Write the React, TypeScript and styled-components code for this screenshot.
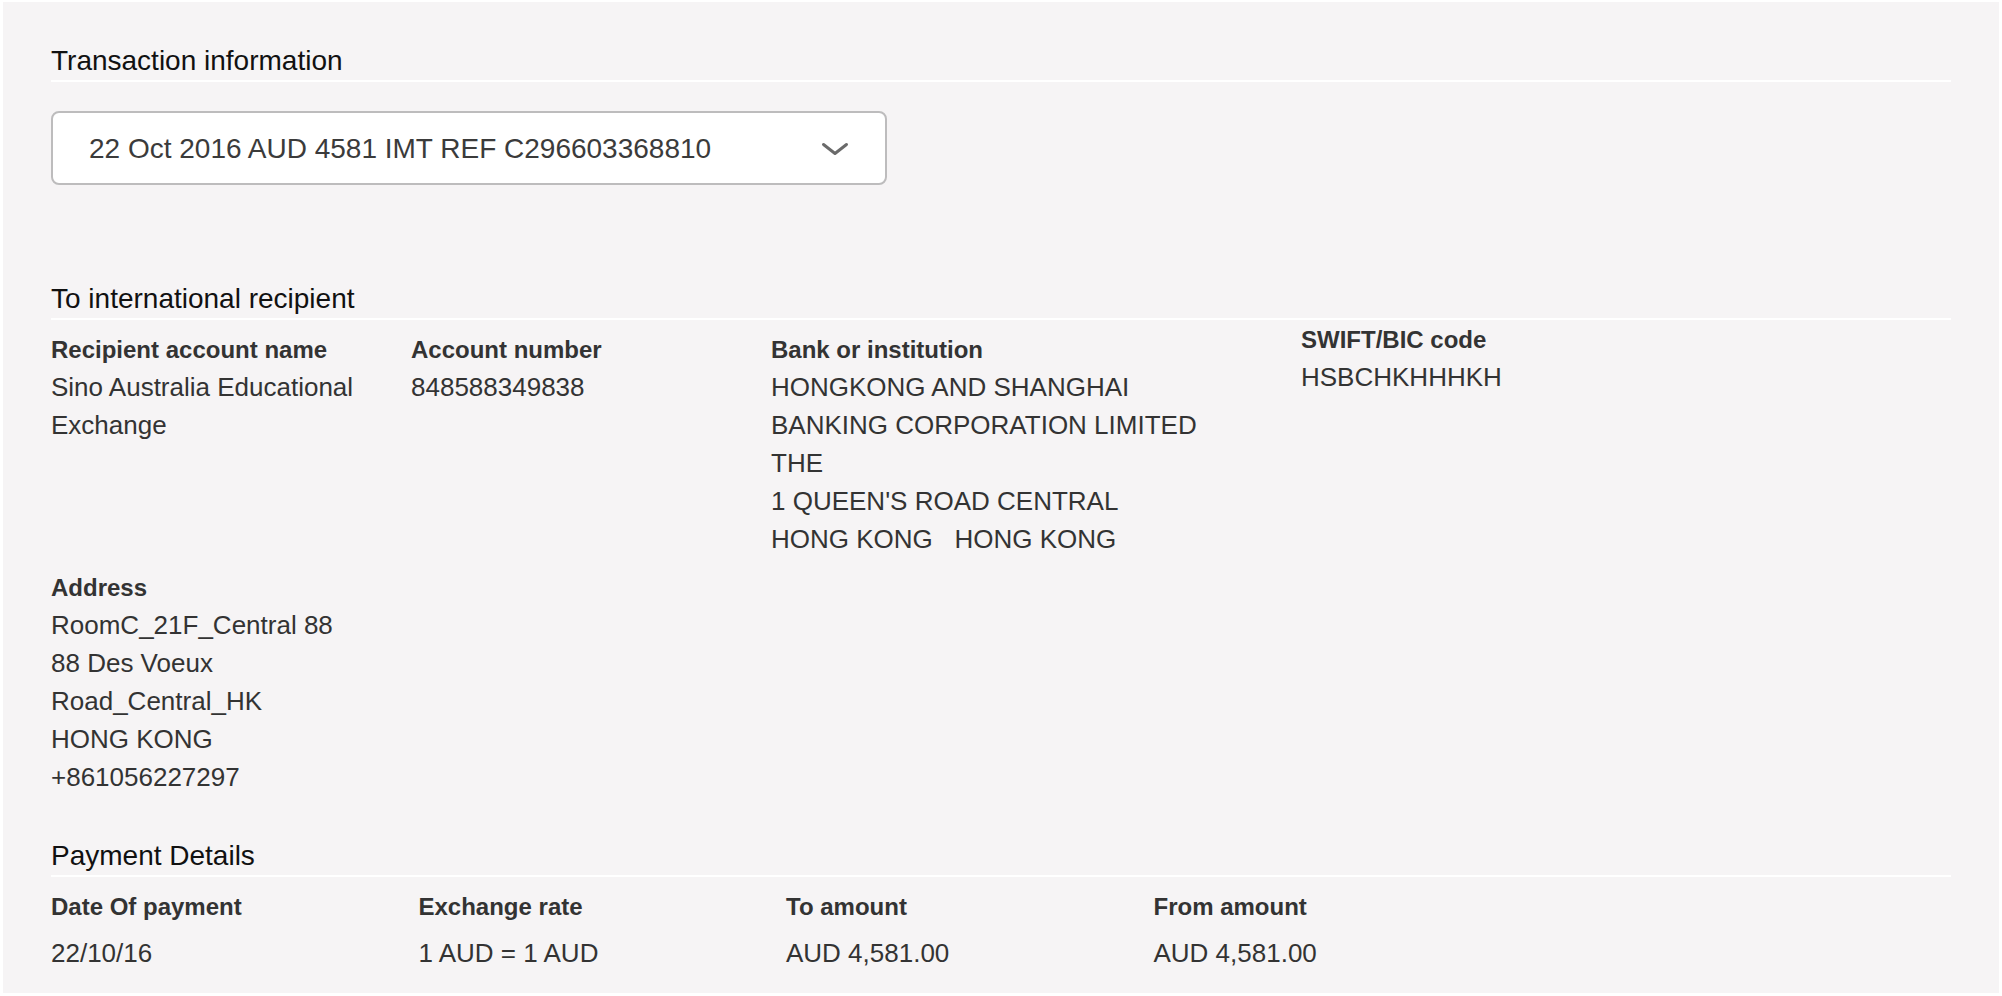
import React from "react";
import styled, { createGlobalStyle } from "styled-components";

const GlobalStyle = createGlobalStyle`
  html, body {
    margin: 0;
    padding: 0;
    background: #ffffff;
  }
  body {
    font-family: "Liberation Sans", Arial, Helvetica, sans-serif;
    -webkit-font-smoothing: antialiased;
  }
  * { box-sizing: border-box; }
`;

const Card = styled.main`
  margin: 2px 3px 3px 3px;
  height: 991px;
  background: #f6f4f5;
  padding: 41px 48px 0 48px;
  overflow: hidden;
`;

const SectionTitle = styled.h2<{ $gap?: number }>`
  margin: ${(p) => p.$gap ?? 0}px 0 0 0;
  font-size: 28px;
  line-height: 34px;
  font-weight: 400;
  color: #111111;
  padding-top: 1px;
  padding-bottom: 2px;
  border-bottom: 2px solid #ffffff;
`;

const SelectBox = styled.div`
  margin-top: 29px;
  width: 836px;
  height: 74px;
  background: #ffffff;
  border: 2px solid #bdbcbd;
  border-radius: 8px;
  display: flex;
  align-items: center;
  justify-content: space-between;
  padding: 2px 36px 0 36px;
  font-size: 28px;
  color: #3b3b3b;
`;

const Row = styled.div<{ $cols: string }>`
  margin-top: 12px;
  display: grid;
  grid-template-columns: ${(p) => p.$cols};
  align-items: start;
`;

const Field = styled.div<{ $shift?: number }>`
  display: flex;
  flex-direction: column;
  margin-top: ${(p) => p.$shift ?? 0}px;
`;

const Label = styled.div`
  font-size: 24px;
  line-height: 36px;
  font-weight: 700;
  color: #333333;
`;

const Values = styled.div<{ $gap?: number }>`
  margin-top: ${(p) => p.$gap ?? 0}px;
`;

const Value = styled.div`
  font-size: 26px;
  line-height: 38px;
  color: #333333;
  white-space: pre-wrap;
`;

const Chevron = () => (
  <svg width="28" height="14" viewBox="0 0 28 14" aria-hidden="true">
    <path
      d="M2.5 2.5 L14 11.5 L25.5 2.5"
      fill="none"
      stroke="#6a6a6a"
      strokeWidth="3"
      strokeLinecap="round"
      strokeLinejoin="round"
    />
  </svg>
);

type FieldData = { label: string; lines: string[]; shift?: number };

const recipient: FieldData[] = [
  { label: "Recipient account name", lines: ["Sino Australia Educational", "Exchange"] },
  { label: "Account number", lines: ["848588349838"] },
  {
    label: "Bank or institution",
    lines: [
      "HONGKONG AND SHANGHAI",
      "BANKING CORPORATION LIMITED",
      "THE",
      "1 QUEEN'S ROAD CENTRAL",
      "HONG KONG   HONG KONG",
    ],
  },
  { label: "SWIFT/BIC code", lines: ["HSBCHKHHHKH"], shift: -10 },
];

const address: FieldData[] = [
  {
    label: "Address",
    lines: ["RoomC_21F_Central 88", "88 Des Voeux", "Road_Central_HK", "HONG KONG", "+861056227297"],
  },
];

const payment: FieldData[] = [
  { label: "Date Of payment", lines: ["22/10/16"] },
  { label: "Exchange rate", lines: ["1 AUD = 1 AUD"] },
  { label: "To amount", lines: ["AUD 4,581.00"] },
  { label: "From amount", lines: ["AUD 4,581.00"] },
];

const renderFields = (fields: FieldData[], valueGap = 0) =>
  fields.map((f) => (
    <Field key={f.label} $shift={f.shift}>
      <Label>{f.label}</Label>
      <Values $gap={valueGap}>
        {f.lines.map((l, i) => (
          <Value key={i}>{l}</Value>
        ))}
      </Values>
    </Field>
  ));

export default function App() {
  return (
    <>
      <GlobalStyle />
      <Card>
        <SectionTitle>Transaction information</SectionTitle>
        <SelectBox>
          <span>22 Oct 2016 AUD 4581 IMT REF C296603368810</span>
          <Chevron />
        </SelectBox>

        <SectionTitle $gap={96}>To international recipient</SectionTitle>
        <Row $cols="360px 360px 530px 1fr">{renderFields(recipient)}</Row>
        <Row $cols="360px 1fr">{renderFields(address)}</Row>

        <SectionTitle $gap={42}>Payment Details</SectionTitle>
        <Row $cols="367.5px 367.5px 367.5px 1fr">{renderFields(payment, 9)}</Row>
      </Card>
    </>
  );
}
